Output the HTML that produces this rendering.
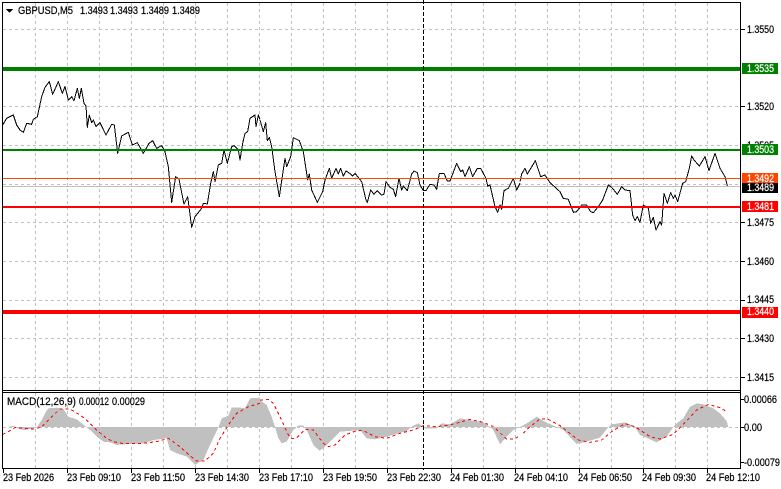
<!DOCTYPE html>
<html>
<head>
<meta charset="utf-8">
<style>
html,body{margin:0;padding:0;background:#fff;width:781px;height:489px;overflow:hidden}
svg{display:block}
text{font-family:"Liberation Sans",sans-serif;font-size:11px;fill:#000;stroke:#000;stroke-width:.22px}
text.w{fill:#fff;stroke:#fff}
.grid line{stroke:#c0c0c0;stroke-width:1;stroke-dasharray:3 3}
.crisp{shape-rendering:crispEdges}
.price{fill:none;stroke:#000;stroke-width:1;vector-effect:non-scaling-stroke;stroke-linejoin:round}
.sig{fill:none;stroke:#f00;stroke-width:1;stroke-dasharray:3 3;vector-effect:non-scaling-stroke}
.hist{fill:#c0c0c0;stroke:none}
</style>
</head>
<body>
<svg width="781" height="489" viewBox="0 0 781 489" xmlns="http://www.w3.org/2000/svg">
<g class="grid crisp">
<line x1="35.5" y1="3" x2="35.5" y2="390"/><line x1="67.5" y1="3" x2="67.5" y2="390"/><line x1="99.5" y1="3" x2="99.5" y2="390"/><line x1="131.5" y1="3" x2="131.5" y2="390"/><line x1="163.5" y1="3" x2="163.5" y2="390"/><line x1="195.5" y1="3" x2="195.5" y2="390"/><line x1="227.5" y1="3" x2="227.5" y2="390"/><line x1="259.5" y1="3" x2="259.5" y2="390"/><line x1="291.5" y1="3" x2="291.5" y2="390"/><line x1="323.5" y1="3" x2="323.5" y2="390"/><line x1="355.5" y1="3" x2="355.5" y2="390"/><line x1="387.5" y1="3" x2="387.5" y2="390"/><line x1="451.5" y1="3" x2="451.5" y2="390"/><line x1="483.5" y1="3" x2="483.5" y2="390"/><line x1="515.5" y1="3" x2="515.5" y2="390"/><line x1="547.5" y1="3" x2="547.5" y2="390"/><line x1="579.5" y1="3" x2="579.5" y2="390"/><line x1="611.5" y1="3" x2="611.5" y2="390"/><line x1="643.5" y1="3" x2="643.5" y2="390"/><line x1="675.5" y1="3" x2="675.5" y2="390"/><line x1="707.5" y1="3" x2="707.5" y2="390"/>
<line x1="3" y1="29.5" x2="740" y2="29.5"/><line x1="3" y1="106.5" x2="740" y2="106.5"/><line x1="3" y1="145.5" x2="740" y2="145.5"/><line x1="3" y1="184.5" x2="740" y2="184.5"/><line x1="3" y1="222.5" x2="740" y2="222.5"/><line x1="3" y1="261.5" x2="740" y2="261.5"/><line x1="3" y1="300.5" x2="740" y2="300.5"/><line x1="3" y1="338.5" x2="740" y2="338.5"/><line x1="3" y1="377.5" x2="740" y2="377.5"/>
<line x1="35.5" y1="393" x2="35.5" y2="468"/><line x1="67.5" y1="393" x2="67.5" y2="468"/><line x1="99.5" y1="393" x2="99.5" y2="468"/><line x1="131.5" y1="393" x2="131.5" y2="468"/><line x1="163.5" y1="393" x2="163.5" y2="468"/><line x1="195.5" y1="393" x2="195.5" y2="468"/><line x1="227.5" y1="393" x2="227.5" y2="468"/><line x1="259.5" y1="393" x2="259.5" y2="468"/><line x1="291.5" y1="393" x2="291.5" y2="468"/><line x1="323.5" y1="393" x2="323.5" y2="468"/><line x1="355.5" y1="393" x2="355.5" y2="468"/><line x1="387.5" y1="393" x2="387.5" y2="468"/><line x1="451.5" y1="393" x2="451.5" y2="468"/><line x1="483.5" y1="393" x2="483.5" y2="468"/><line x1="515.5" y1="393" x2="515.5" y2="468"/><line x1="547.5" y1="393" x2="547.5" y2="468"/><line x1="579.5" y1="393" x2="579.5" y2="468"/><line x1="611.5" y1="393" x2="611.5" y2="468"/><line x1="643.5" y1="393" x2="643.5" y2="468"/><line x1="675.5" y1="393" x2="675.5" y2="468"/><line x1="707.5" y1="393" x2="707.5" y2="468"/>
<line x1="3" y1="427.5" x2="740" y2="427.5"/>
</g>

<!-- MACD histogram -->
<g class="crisp">
<polygon class="hist" transform="translate(0,385) scale(.33333)" points="8,126 8,128 40,123 60,133 75,135 110,128 125,105 135,85 145,70 170,68 190,72 205,95 230,103 258,125 270,135 290,155 310,170 330,172 350,180 370,178 430,176 460,165 500,160 510,195 530,205 560,215 585,240 610,225 630,180 655,128 665,100 685,92 695,68 715,67 735,70 750,40 780,38 780,126"/>
<polygon class="hist" transform="translate(260,385) scale(.33333)" points="0,126 0,45 20,60 35,95 45,125 55,160 65,175 80,170 100,135 115,122 130,122 140,135 160,180 178,197 190,190 215,165 240,140 300,135 320,160 345,163 380,155 440,138 460,122 475,115 490,125 495,130 530,130 545,115 570,118 600,100 630,105 670,112 690,126 700,135 720,178 740,155 760,135 780,126"/>
<polygon class="hist" transform="translate(520,385) scale(.33333)" points="0,126 20,115 50,95 65,105 85,115 110,126 130,135 170,177 200,170 240,158 265,126 275,118 315,112 335,120 345,126 360,150 410,172 440,155 460,126 470,115 490,100 510,65 530,55 550,58 580,70 600,85 620,108 625,126"/>
</g>
<g class="crisp">
<polyline class="sig" transform="translate(0,385) scale(.33333)" points="8,148 25,140 45,128 105,132 125,125 150,100 180,72 210,72 240,90 260,105 290,135 320,160 340,170 370,176 420,176 470,170 505,160 540,185 570,212 590,228 615,228 640,205 660,160 685,120 710,85 745,65 780,55"/>
<polyline class="sig" transform="translate(260,385) scale(.33333)" points="0,45 25,43 40,55 60,95 85,150 95,160 108,160 135,133 160,135 190,175 205,185 225,180 255,150 290,137 310,137 345,155 380,160 420,145 460,135 490,122 530,125 570,120 630,103 670,112 700,125 740,162 765,162 780,150"/>
<polyline class="sig" transform="translate(520,385) scale(.33333)" points="10,145 30,125 60,102 85,103 120,122 175,165 210,172 245,165 275,140 315,116 345,125 390,155 420,162 460,148 490,118 530,75 565,58 600,68 620,80"/>
</g>

<!-- price -->
<g class="crisp">
<rect x="3" y="186" width="737" height="1" fill="#c0c0c0"/>
<polyline class="price" transform="translate(0,0) scale(.33333)" points="8,375 20,355 40,345 50,375 60,390 70,397 80,370 95,373 100,358 112,350 125,290 135,262 148,245 158,283 175,245 187,280 195,260 205,300 215,290 222,302 232,265 238,295 244,265 252,310 258,318 262,382 268,345 275,368 280,360 288,380 300,368 318,405 335,373 343,375 353,460 365,408 385,397 397,435 412,428 430,460 447,430 458,422 470,445 485,437 495,455 505,500 515,607 527,530 537,537 552,612 563,590 575,682 585,650 605,625 610,610 622,612 632,550 640,515 645,545 655,495 665,490 672,450 682,490 695,440 703,437 715,450 720,480 728,430 735,400 743,395 750,355 765,345 768,380 775,345 780,358"/>
<polyline class="price" transform="translate(260,100) scale(.33333)" points="0,60 10,95 17,68 22,122 28,112 35,140 45,215 58,290 75,175 80,200 92,170 100,113 118,122 130,155 143,240 148,222 155,270 172,307 188,275 195,240 208,205 215,235 228,205 235,222 242,205 250,228 258,213 272,222 278,228 285,220 305,245 318,300 322,307 332,270 342,283 352,272 365,285 372,283 378,245 390,262 400,268 407,290 417,235 425,270 430,258 442,272 455,222 462,213 472,218 480,255 490,272 498,272 510,253 522,255 530,268 538,220 552,220 562,243 570,243 590,190 602,215 608,210 615,230 628,200 638,230 652,205 662,205 678,235 683,258 690,255 705,320 713,337 720,315 725,328 732,272 745,265 760,235 770,270 780,250"/>
<polyline class="price" transform="translate(520,100) scale(.33333)" points="0,245 5,222 15,205 22,222 46,182 62,230 75,225 88,245 98,255 120,275 130,295 145,298 160,337 170,335 185,315 200,315 212,335 220,338 235,320 248,300 265,255 275,262 292,283 305,260 315,270 330,272 338,345 345,362 352,350 360,367 370,315 385,325 392,370 400,352 408,390 420,365 425,375 432,280 442,310 452,278 460,295 465,285 473,305 488,250 497,245 508,205 515,168 522,180 538,198 555,170 567,212 585,160 600,205 615,230 622,258"/>
<rect x="3" y="178" width="738" height="1" fill="#ff4500"/>
<rect x="3" y="149" width="738" height="2" fill="#008000"/>
<rect x="3" y="67" width="738" height="4" fill="#008000"/>
<rect x="3" y="206" width="738" height="2" fill="#ff0000"/>
<rect x="3" y="310" width="738" height="4" fill="#ff0000"/>
</g>

<!-- frame -->
<g class="crisp" fill="#000">
<rect x="2" y="2" width="1" height="467"/>
<rect x="740" y="2" width="1" height="467"/>
<rect x="2" y="2" width="739" height="1"/>
<rect x="2" y="390" width="739" height="1"/>
<rect x="2" y="392" width="739" height="1"/>
<rect x="2" y="468" width="739" height="1"/>
<!-- y-ticks -->
<rect x="741" y="29" width="4" height="1"/><rect x="741" y="106" width="4" height="1"/><rect x="741" y="222" width="4" height="1"/><rect x="741" y="261" width="4" height="1"/><rect x="741" y="300" width="4" height="1"/><rect x="741" y="338" width="4" height="1"/><rect x="741" y="377" width="4" height="1"/><rect x="741" y="399" width="3" height="1"/><rect x="741" y="427" width="3" height="1"/><rect x="741" y="462" width="3" height="1"/>
<!-- x-ticks -->
<rect x="3" y="469" width="1" height="4"/><rect x="67" y="469" width="1" height="4"/><rect x="131" y="469" width="1" height="4"/><rect x="195" y="469" width="1" height="4"/><rect x="259" y="469" width="1" height="4"/><rect x="323" y="469" width="1" height="4"/><rect x="387" y="469" width="1" height="4"/><rect x="451" y="469" width="1" height="4"/><rect x="515" y="469" width="1" height="4"/><rect x="579" y="469" width="1" height="4"/><rect x="643" y="469" width="1" height="4"/><rect x="707" y="469" width="1" height="4"/>
</g>
<g class="crisp"><line x1="423.5" y1="0" x2="423.5" y2="470" stroke="#000" stroke-width="1" stroke-dasharray="4 2"/></g>

<!-- title -->
<polygon class="crisp" points="6,9 13,9 9.5,13" fill="#000"/>
<text x="18" y="14" textLength="55" lengthAdjust="spacingAndGlyphs">GBPUSD,M5</text>
<text x="80" y="14" textLength="28" lengthAdjust="spacingAndGlyphs">1.3493</text>
<text x="110" y="14" textLength="28" lengthAdjust="spacingAndGlyphs">1.3493</text>
<text x="141" y="14" textLength="28" lengthAdjust="spacingAndGlyphs">1.3489</text>
<text x="172" y="14" textLength="28" lengthAdjust="spacingAndGlyphs">1.3489</text>
<text x="7" y="405" textLength="69" lengthAdjust="spacingAndGlyphs">MACD(12,26,9)</text>
<text x="79" y="405" textLength="30" lengthAdjust="spacingAndGlyphs">0.00012</text>
<text x="112" y="405" textLength="33" lengthAdjust="spacingAndGlyphs">0.00029</text>

<!-- right axis -->
<text x="747" y="33" textLength="27" lengthAdjust="spacingAndGlyphs">1.3550</text>
<text x="747" y="110" textLength="27" lengthAdjust="spacingAndGlyphs">1.3520</text>
<text x="747" y="149" textLength="27" lengthAdjust="spacingAndGlyphs">1.3505</text>
<text x="747" y="226" textLength="27" lengthAdjust="spacingAndGlyphs">1.3475</text>
<text x="747" y="265" textLength="27" lengthAdjust="spacingAndGlyphs">1.3460</text>
<text x="747" y="303" textLength="27" lengthAdjust="spacingAndGlyphs">1.3445</text>
<text x="747" y="342" textLength="27" lengthAdjust="spacingAndGlyphs">1.3430</text>
<text x="747" y="381" textLength="27" lengthAdjust="spacingAndGlyphs">1.3415</text>
<text x="744" y="403" textLength="33" lengthAdjust="spacingAndGlyphs">0.00066</text>
<text x="744" y="431" textLength="18" lengthAdjust="spacingAndGlyphs">0.00</text>
<text x="744" y="466" textLength="36" lengthAdjust="spacingAndGlyphs">-0.00079</text>

<!-- labelled boxes -->
<g class="crisp">
<rect x="742" y="63" width="36" height="11" fill="#008000"/>
<rect x="742" y="144" width="36" height="11" fill="#008000"/>
<rect x="742" y="173" width="36" height="11" fill="#ff4500"/>
<rect x="742" y="201" width="36" height="11" fill="#ff0000"/>
<rect x="742" y="307" width="36" height="11" fill="#ff0000"/>
</g>
<text class="w" x="747" y="72" textLength="27" lengthAdjust="spacingAndGlyphs">1.3535</text>
<text class="w" x="747" y="153" textLength="27" lengthAdjust="spacingAndGlyphs">1.3503</text>
<text class="w" x="747" y="182" textLength="27" lengthAdjust="spacingAndGlyphs">1.3492</text>
<rect class="crisp" x="742" y="183" width="36" height="10" fill="#000"/>
<text class="w" x="747" y="191" textLength="27" lengthAdjust="spacingAndGlyphs">1.3489</text>
<text class="w" x="747" y="210" textLength="27" lengthAdjust="spacingAndGlyphs">1.3481</text>
<text class="w" x="747" y="315" textLength="27" lengthAdjust="spacingAndGlyphs">1.3440</text>

<!-- time axis -->
<text x="3" y="481" textLength="51" lengthAdjust="spacingAndGlyphs">23 Feb 2026</text>
<text x="67" y="481" textLength="54" lengthAdjust="spacingAndGlyphs">23 Feb 09:10</text>
<text x="131" y="481" textLength="54" lengthAdjust="spacingAndGlyphs">23 Feb 11:50</text>
<text x="195" y="481" textLength="54" lengthAdjust="spacingAndGlyphs">23 Feb 14:30</text>
<text x="259" y="481" textLength="54" lengthAdjust="spacingAndGlyphs">23 Feb 17:10</text>
<text x="323" y="481" textLength="54" lengthAdjust="spacingAndGlyphs">23 Feb 19:50</text>
<text x="387" y="481" textLength="54" lengthAdjust="spacingAndGlyphs">23 Feb 22:30</text>
<text x="450" y="481" textLength="54" lengthAdjust="spacingAndGlyphs">24 Feb 01:30</text>
<text x="514" y="481" textLength="54" lengthAdjust="spacingAndGlyphs">24 Feb 04:10</text>
<text x="578" y="481" textLength="54" lengthAdjust="spacingAndGlyphs">24 Feb 06:50</text>
<text x="642" y="481" textLength="54" lengthAdjust="spacingAndGlyphs">24 Feb 09:30</text>
<text x="706" y="481" textLength="54" lengthAdjust="spacingAndGlyphs">24 Feb 12:10</text>
</svg>
</body>
</html>
